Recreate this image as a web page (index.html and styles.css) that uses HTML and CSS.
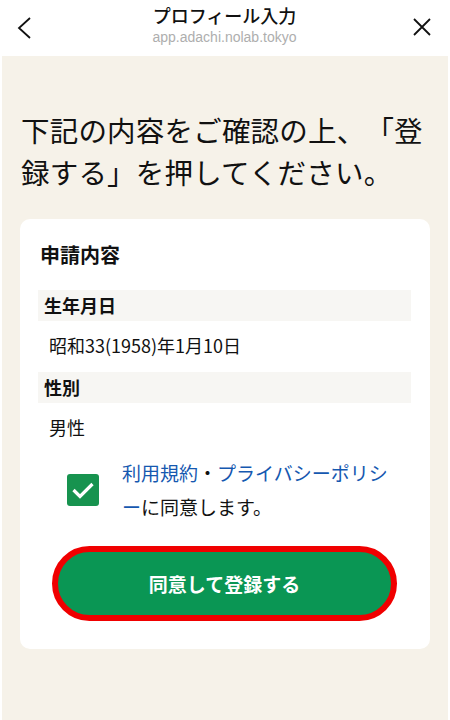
FILE: index.html
```html
<!DOCTYPE html>
<html lang="ja">
<head>
    <meta charset="utf-8">
    <title>プロフィール入力</title>
    <link rel="stylesheet" href="styles.css">
</head>
<body>
    <div class="topbar">
        <svg class="icon back" width="16" height="24" viewBox="0 0 16 24">
            <path d="M13 2 L2 12 L13 22" fill="none" stroke="#111" stroke-width="1.8"/>
        </svg>
        <div class="topbar-title">
            <div class="title">プロフィール入力</div>
            <div class="url">app.adachi.nolab.tokyo</div>
        </div>
        <svg class="icon close" width="20" height="20" viewBox="0 0 20 20">
            <path d="M2 2 L18 18 M18 2 L2 18" fill="none" stroke="#111" stroke-width="1.8"/>
        </svg>
    </div>

    <div class="main">
        <p class="lead">下記の内容をご確認の上、「登録する」を押してください。</p>

        <div class="card">
            <h3>申請内容</h3>
            <div class="field-label">生年月日</div>
            <div class="field-value">昭和33(1958)年1月10日</div>
            <div class="field-label">性別</div>
            <div class="field-value last">男性</div>

            <div class="agree">
                <span class="checkbox">
                    <svg width="24" height="20" viewBox="0 0 24 20">
                        <path d="M2.5 10 L9 16.5 L21.5 4" fill="none" stroke="#fff" stroke-width="3.2"/>
                    </svg>
                </span>
                <p class="agree-text"><a href="#">利用規約</a>・<a href="#">プライバシーポリシー</a>に同意します。</p>
            </div>

            <button class="submit">同意して登録する</button>
        </div>
    </div>
</body>
</html>
```

FILE: styles.css
```css
body {
    margin: 0;
    background: #fff;
    font-family: "Noto Sans CJK JP", "Noto Sans", sans-serif;
    color: #111;
    text-spacing-trim: space-all;
}

.topbar {
    height: 56px;
    display: flex;
    align-items: center;
    justify-content: space-between;
    padding: 0 18px 0 17px;
    box-sizing: border-box;
}

.topbar .back {
    margin-top: -1px;
}

.topbar .close {
    margin-top: -2px;
}

.topbar-title {
    text-align: center;
    margin-left: 4px;
}

.title {
    font-size: 18px;
    font-weight: 500;
    line-height: 22px;
    margin-top: -8px;
}

.url {
    font-family: "Liberation Sans", Arial, sans-serif;
    font-size: 14px;
    line-height: 16px;
    color: #aeaeae;
    margin-top: 3px;
}

.main {
    background: #f6f2e9;
    margin: 0 2px;
    padding: 53px 18px 72px;
    min-height: 664px;
    box-sizing: border-box;
}

.lead {
    margin: 0 0 26px 1px;
    font-size: 28.5px;
    line-height: 42px;
    letter-spacing: 0.2px;
}

.card {
    background: #fff;
    border-radius: 10px;
    padding: 21px 19px 28px 18px;
}

.card h3 {
    margin: 0 0 20px 2px;
    font-size: 20px;
    font-weight: 700;
    line-height: 30px;
}

.field-label {
    background: #f7f6f3;
    height: 31px;
    line-height: 31px;
    padding-left: 6px;
    font-size: 18px;
    font-weight: 700;
}

.field-value {
    height: 51px;
    line-height: 49px;
    padding-left: 11px;
    font-size: 18px;
}

.field-value.last {
    height: 46px;
    line-height: 48px;
}

.agree {
    display: flex;
    align-items: center;
    gap: 23px;
    padding-left: 29px;
    margin-top: 7px;
}

.checkbox {
    width: 32px;
    height: 32px;
    border-radius: 3px;
    background: #17934f;
    display: flex;
    align-items: center;
    justify-content: center;
    flex-shrink: 0;
}

.agree-text {
    margin: 0;
    width: 272px;
    font-size: 19px;
    line-height: 34px;
}

.agree-text a {
    color: #1558b0;
    text-decoration: none;
}

.submit {
    display: block;
    margin: 22px auto 0;
    width: 345px;
    height: 75px;
    border: 6px solid #f00000;
    border-radius: 38px;
    background: #0a9654;
    color: #fff;
    font-family: "Noto Sans CJK JP", "Noto Sans", sans-serif;
    font-size: 19px;
    font-weight: 700;
}
```
